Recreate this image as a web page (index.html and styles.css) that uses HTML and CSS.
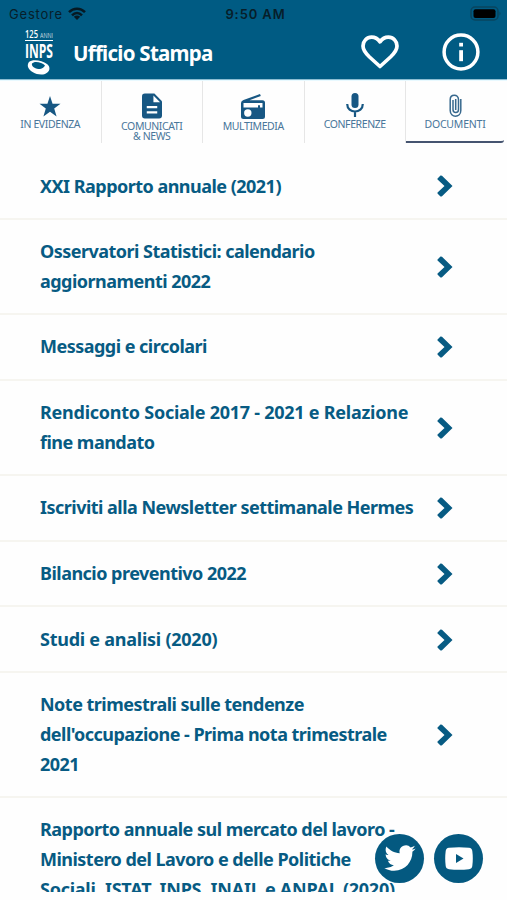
FILE: index.html
```html
<!DOCTYPE html>
<html lang="it">
<head>
    <meta charset="UTF-8">
    <meta name="viewport" content="width=device-width, initial-scale=1.0">
    <title>Ufficio Stampa</title>
    <link rel="stylesheet" href="styles.css">
</head>
<body>
    <svg class="symbols" width="0" height="0">
        <symbol id="chevron" viewBox="0 0 16 22">
            <path d="M0.500 3.500L3.500 .5Q4.200 .2 5 .8L15.500 11L5 21.200Q4.200 21.800 3.500 21.500L.5 18.500Q.2 17.800 .8 17.200L7.500 11L.8 4.800Q.2 4.200 .5 3.500Z" fill="currentColor"/>
        </symbol>
    </svg>

    <header class="header">
        <div class="status-bar">
            <div class="carrier">
                <span>Gestore</span>
                <svg width="18" height="14" viewBox="0 0 18 14" fill="none" stroke="#061923" stroke-width="2.500">
                    <path d="M1 5.200C5.500 .5 12.500 .5 17 5.200M4 8.300C7 5.300 11 5.300 14 8.300"/>
                    <path d="M9 13L5.800 9.800C7.600 8 10.400 8 12.200 9.800Z" fill="#061923" stroke="none"/>
                </svg>
            </div>
            <span class="clock">9:50 AM</span>
            <svg class="battery" width="32" height="15" viewBox="0 0 32 15">
                <rect x="1" y="1" width="27" height="13" rx="4" fill="none" stroke="#08455f" stroke-width="1.500"/>
                <rect x="3.500" y="3.300" width="22" height="8.800" rx="2" fill="#000"/>
                <path d="M29.500 5.500Q31.500 7.500 29.500 9.500Z" fill="#08455f"/>
            </svg>
        </div>
        <div class="title-bar">
            <svg class="logo" width="28" height="46" viewBox="0 0 28 46" fill="#fff">
                <text class="logo-years" x="0" y="8" textLength="13" lengthAdjust="spacingAndGlyphs">125</text>
                <text class="logo-anni" x="15" y="7.500" textLength="13" lengthAdjust="spacingAndGlyphs">ANNI</text>
                <rect x="0" y="10" width="28" height="1"/>
                <text class="logo-name" x="0" y="28" textLength="28" lengthAdjust="spacingAndGlyphs">INPS</text>
                <path d="M4 32C7 29 17 30 22 34C26 37 25 42 20 44C13 46 5 42 3 37C2.500 35 3 33 4 32Z"/>
                <path d="M7 33.500C9 30.500 17 32 20 35.500C19 37 17.500 38.700 15 39C11 39 6 37 7 33.500Z" fill="#005b83"/>
            </svg>
            <h1>Ufficio Stampa</h1>
            <svg class="heart" width="38" height="35" viewBox="0 0 38 35" fill="none" stroke="#fff" stroke-width="3.700" stroke-linejoin="round">
                <path d="M19 31.500L8.500 22C4.500 18.200 2 15.300 2 11C2 6 5.800 2.200 10.600 2.200C13.800 2.200 16.800 3.800 19 6.800C21.200 3.800 24.200 2.200 27.400 2.200C32.200 2.200 36 6 36 11C36 15.300 33.500 18.200 29.500 22Z"/>
            </svg>
            <svg class="info" width="38" height="38" viewBox="0 0 38 38" fill="#fff">
                <circle cx="19" cy="19" r="16.900" fill="none" stroke="#fff" stroke-width="3.500"/>
                <rect x="17.200" y="9.800" width="3.800" height="3.700"/>
                <rect x="17.200" y="17.200" width="3.800" height="11"/>
            </svg>
        </div>
    </header>

    <nav class="tabs">
        <a class="tab evidenza">
            <svg width="22" height="21" viewBox="0 0 22 22"><path d="M11 0L13.700 8H22L15.400 13L17.900 21.500L11 16.400L4.100 21.500L6.600 13L0 8H8.300Z"/></svg>
            <span>IN EVIDENZA</span>
        </a>
        <a class="tab comunicati">
            <svg width="20" height="26" viewBox="0 0 21 26">
                <path d="M3 0H13L21 8V23Q21 26 18 26H3Q0 26 0 23V3Q0 0 3 0Z"/>
                <path d="M12 2V9H19ZM5 13H16V15.300H5ZM5 18.500H16V20.800H5Z" fill="#fff"/>
            </svg>
            <span>COMUNICATI<br>&amp; NEWS</span>
        </a>
        <a class="tab multimedia">
            <svg width="24" height="25" viewBox="0 0 24 25">
                <path d="M2.500 6L19 0L19.800 2L8.500 6.200H21.500Q24 6.200 24 8.700V22.500Q24 25 21.500 25H2.500Q0 25 0 22.500V9Q0 7 2.500 6Z"/>
                <path d="M2.500 9H21.500V13.500H19V11.200H17V13.500H2.500Z" fill="#fff"/>
                <circle cx="6.800" cy="19" r="3.700" fill="#fff"/>
            </svg>
            <span>MULTIMEDIA</span>
        </a>
        <a class="tab conferenze">
            <svg width="18" height="24" viewBox="0 0 18 24">
                <rect x="5.500" y="0" width="7" height="15" rx="3.500"/>
                <path d="M1.200 11C1.200 21 16.800 21 16.800 11M9 18V24" fill="none" stroke="#175783" stroke-width="2.200"/>
            </svg>
            <span>CONFERENZE</span>
        </a>
        <a class="tab documenti active">
            <svg width="13" height="23" viewBox="0 0 13 23">
                <path d="M11.800 5V16.500C11.800 24 1.200 24 1.200 16.500V5.500C1.200-.3 9.500-.3 9.500 5.500V15.500C9.500 19.500 4 19.500 4 15.500V6M6.700 5V16" fill="none" stroke="#38698e" stroke-width="1.500"/>
            </svg>
            <span>DOCUMENTI</span>
        </a>
    </nav>

    <main class="documents">
        <a class="row">
            <span>XXI Rapporto annuale (2021)</span>
            <svg class="chevron"><use href="#chevron"/></svg>
        </a>
        <a class="row">
            <span>Osservatori Statistici: calendario<br>aggiornamenti 2022</span>
            <svg class="chevron"><use href="#chevron"/></svg>
        </a>
        <a class="row">
            <span>Messaggi e circolari</span>
            <svg class="chevron"><use href="#chevron"/></svg>
        </a>
        <a class="row">
            <span><span class="loose">Rendiconto Sociale 2017 - 2021 e Relazione</span><br>fine mandato</span>
            <svg class="chevron"><use href="#chevron"/></svg>
        </a>
        <a class="row">
            <span>Iscriviti alla Newsletter settimanale Hermes</span>
            <svg class="chevron"><use href="#chevron"/></svg>
        </a>
        <a class="row">
            <span>Bilancio preventivo 2022</span>
            <svg class="chevron"><use href="#chevron"/></svg>
        </a>
        <a class="row">
            <span class="loose">Studi e analisi (2020)</span>
            <svg class="chevron"><use href="#chevron"/></svg>
        </a>
        <a class="row">
            <span>Note trimestrali sulle tendenze<br>dell'occupazione - Prima nota trimestrale<br>2021</span>
            <svg class="chevron"><use href="#chevron"/></svg>
        </a>
        <a class="row">
            <span>Rapporto annuale sul mercato del lavoro -<br>Ministero del Lavoro e delle Politiche<br><span class="loose">Sociali, ISTAT, INPS, INAIL e ANPAL (2020)</span></span>
        </a>
    </main>

    <div class="social">
        <a>
            <svg width="32" height="27" viewBox="1 2.500 22 19" fill="#fff">
                <path d="M23 4.900c-.8.400-1.700.6-2.600.7.900-.6 1.600-1.400 2-2.500-.9.500-1.800.9-2.900 1.100A4.500 4.500 0 0 0 11.800 8.300C8 8.100 4.700 6.300 2.500 3.600c-1.200 2-.6 4.700 1.400 6-.7 0-1.400-.2-2-.6 0 2.100 1.400 4.100 3.600 4.500-.6.200-1.300.2-2 .1.600 1.800 2.200 3.100 4.200 3.100A9.100 9.100 0 0 1 1 18.600c2 1.300 4.400 2 6.900 2 8.400 0 13.100-7.100 12.800-13.400.9-.6 1.700-1.400 2.300-2.300z"/>
            </svg>
        </a>
        <a>
            <svg width="28" height="23" viewBox="0 0 28 23">
                <path d="M4 .8Q14-.5 24 .8Q27 1.200 27.300 4Q28.300 11.500 27.300 19Q27 21.800 24 22.200Q14 23.500 4 22.200Q1 21.800 .7 19Q-.3 11.500 .7 4Q1 1.200 4 .8Z" fill="#fff"/>
                <path d="M11 7L18.500 11.500L11 16Z" fill="#045980"/>
            </svg>
        </a>
    </div>
</body>
</html>
```
FILE: styles.css
```css
* {
    box-sizing: border-box;
}

body {
    margin: 0;
    height: 900px;
    overflow: hidden;
    background: #fefefe;
    font-family: "Noto Sans", "Open Sans", sans-serif;
    color: #075b83;
}

svg {
    display: block;
    flex: none;
}

.symbols {
    position: absolute;
}

.header {
    height: 80px;
    background: #005b83;
    border-bottom: 1px solid #8bbdd2;
}

.status-bar {
    display: grid;
    grid-template-columns: 1fr auto 1fr;
    align-items: center;
    height: 27px;
    padding: 0 5px 0 9px;
    color: #071e2a;
    font-family: Inter, sans-serif;
    font-size: 13px;
}

.carrier {
    display: flex;
    align-items: center;
    gap: 5px;
    letter-spacing: 0.8px;
}

.clock {
    font-weight: 600;
    letter-spacing: 0.9px;
}

.battery {
    justify-self: end;
}

.title-bar {
    display: flex;
    height: 52px;
    align-items: center;
    color: #fff;
}

.logo {
    margin-left: 25px;
    font-family: "Open Sans", sans-serif;
}

.logo-years {
    font-size: 10px;
    font-weight: 600;
}

.logo-anni {
    font-size: 8px;
    opacity: 0.75;
}

.logo-name {
    font-size: 20px;
    font-weight: 700;
}

h1 {
    width: 288px;
    margin: 0 0 0 20px;
    font-size: 20.5px;
    line-height: 30px;
    font-weight: 700;
    letter-spacing: -0.75px;
}

.heart {
    position: relative;
    top: -1px;
}

.info {
    margin-left: 43px;
    position: relative;
    top: -1px;
}

.tabs {
    display: flex;
    height: 74px;
    border-top: 1px solid #e8f9ff;
}

.tab {
    display: flex;
    flex-direction: column;
    align-items: center;
    width: 101.5px;
    height: 62px;
    fill: #175783;
    color: #49769a;
    font-size: 10.5px;
    line-height: 10px;
    letter-spacing: -0.4px;
    text-align: center;
    border-right: 1px solid #e6e6e6;
}

.tab svg {
    margin-bottom: 2px;
}

.evidenza {
    padding-top: 15px;
}

.comunicati {
    padding-top: 12px;
}

.multimedia {
    padding-top: 13px;
}

.conferenze {
    padding-top: 12px;
}

.documenti {
    padding-top: 13px;
}

.tab.active {
    width: 98px;
    letter-spacing: -0.2px;
    border-right: 0;
    border-bottom: 2.5px solid #455470;
    border-bottom-right-radius: 3px;
}

.documents {
    height: 738px;
    overflow: hidden;
}

.row {
    display: flex;
    align-items: center;
    justify-content: space-between;
    padding: 17.5px 54px 16.3px 40px;
    border-bottom: 2px solid #f6f5f0;
    font-size: 18px;
    line-height: 29.8px;
    font-weight: 700;
    letter-spacing: -0.52px;
    white-space: nowrap;
}

.loose {
    letter-spacing: -0.25px;
}

.chevron {
    width: 16px;
    height: 22px;
}

.social {
    position: absolute;
    top: 834px;
    left: 375px;
    display: flex;
    gap: 10px;
}

.social a {
    display: flex;
    align-items: center;
    justify-content: center;
    width: 49px;
    height: 49px;
    border-radius: 50%;
    background: #045980;
}
```
